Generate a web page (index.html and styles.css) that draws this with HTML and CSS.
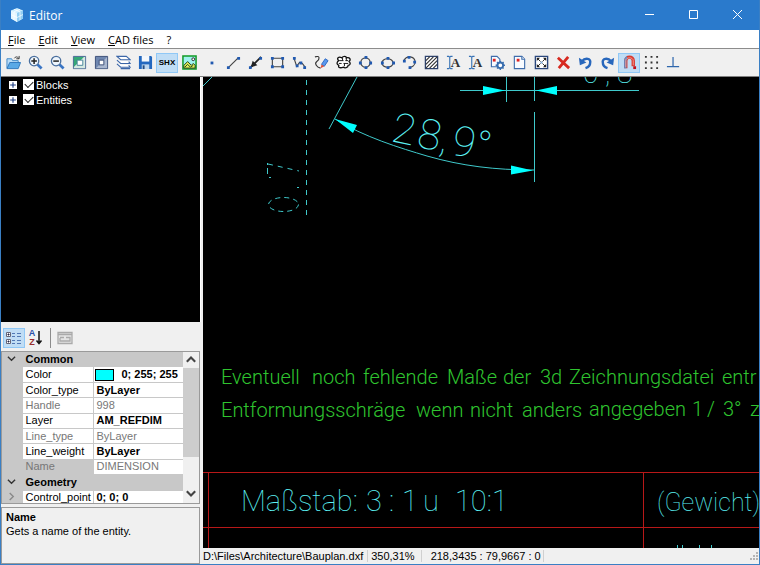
FILE: index.html
```
<!DOCTYPE html>
<html lang="en">
<head>
    <meta charset="UTF-8">
    <meta name="viewport" content="width=device-width, initial-scale=1.0">
    <title>Editor</title>
    <link rel="stylesheet" href="styles.css">
</head>
<body>

<header class="titlebar">
    <svg class="app-icon" viewBox="0 0 16 16"><path d="M8 1l6 2.500v8L8 15l-6-3.500v-8z" fill="#c8ecff"/><path d="M8 6l6-2.500v8L8 15z" fill="#8fcdf3"/><path d="M2 3.500L8 6v9l-6-3.500z" fill="#e4f6ff"/><path d="M5 2.300l6 2.500M11 2.300L5 4.800M5 5v8M2 7.500l6 3 6-3M11 5v8" stroke="#fff" stroke-width=".7" fill="none"/></svg>
    <h1>Editor</h1>
    <div class="window-buttons">
        <button type="button" aria-label="Minimize"><svg viewBox="0 0 11 11"><path d="M1 5.500h9"/></svg></button>
        <button type="button" aria-label="Maximize"><svg viewBox="0 0 11 11"><path d="M1.500 1.500h8v8h-8z"/></svg></button>
        <button type="button" aria-label="Close"><svg viewBox="0 0 11 11"><path d="M1 1l9 9M10 1l-9 9"/></svg></button>
    </div>
</header>

<nav class="menu">
    <button type="button"><u>F</u>ile</button>
    <button type="button"><u>E</u>dit</button>
    <button type="button"><u>V</u>iew</button>
    <button type="button"><u>C</u>AD files</button>
    <button type="button">?</button>
</nav>

<div class="toolbar">
    <button type="button" aria-label="Open"><svg viewBox="0 0 16 16"><path d="M1 14V4h5l1 2h6v3" fill="#b9dcf7" stroke="#3d86c6"/><path d="M1 14.500L4 8h11.500l-2.500 6.500z" fill="#5aa9e6" stroke="#2f78bd"/><path d="M9 3.500c1-2 3-2 4.500 0M14 1v3h-3" fill="none" stroke="#333"/></svg></button>
    <button type="button" aria-label="Zoom in"><svg viewBox="0 0 16 16"><path d="M10 10l4.500 4.500" stroke="#3a75c4" stroke-width="3"/><circle cx="6.500" cy="6.500" r="5" fill="#eef5fc" stroke="#4a6f9e" stroke-width="1.400"/><path d="M6.500 3.500v6M3.500 6.500h6" stroke="#222" stroke-width="1.600"/></svg></button>
    <button type="button" aria-label="Zoom out"><svg viewBox="0 0 16 16"><path d="M10 10l4.500 4.500" stroke="#3a75c4" stroke-width="3"/><circle cx="6.500" cy="6.500" r="5" fill="#eef5fc" stroke="#4a6f9e" stroke-width="1.400"/><path d="M3.500 6.500h6" stroke="#222" stroke-width="1.600"/></svg></button>
    <button type="button" aria-label="Zoom window"><svg viewBox="0 0 16 16"><path d="M1.500 1.500h13v13h-13z" fill="#fff" stroke="#3a5c8c"/><path d="M2 2h11L2 13z" fill="#35a877"/><path d="M13 2h1v12H2v-1z" fill="#d5e9e2"/><path d="M5.500 5.500h6v5.500h-6z" fill="#fff" stroke="#47849a"/></svg></button>
    <button type="button" aria-label="Fit drawing"><svg viewBox="0 0 16 16"><path d="M1.500 1.500h13v13h-13z" fill="#6f87b0" stroke="#3a4d78"/><path d="M2 14L14 2v12z" fill="#a9b7cf"/><path d="M5.500 5.500h5v5h-5z" fill="#fff" stroke="#3a4d78"/></svg></button>
    <button type="button" aria-label="Layers"><svg viewBox="0 0 16 16"><path d="M1 1.500h10l4 3.500H5zM1 5.500L5 9h10l-1.500-2M1 9.500l4 3.500h10l-1.500-2M5 14.500h10" fill="#fff" stroke="#3b66a8" stroke-width="1.200"/></svg></button>
    <button type="button" aria-label="Save"><svg viewBox="0 0 16 16"><path d="M1 1h13l1 1v13H1z" fill="#2468bf"/><path d="M4 1h8v6H4z" fill="#f4f8fc"/><path d="M4 10h8v5H4z" fill="#bed6ee"/><path d="M5 11h2v4H5z" fill="#234b80"/></svg></button>
    <button type="button" class="active shx">SHX</button>
    <button type="button" aria-label="Image"><svg viewBox="0 0 16 16"><path d="M1 1h14v14H1z" fill="#9ff2ee" stroke="#129a26" stroke-width="1.600"/><path d="M2 11l4-4 4 4 2-2 2 2v3H2z" fill="#e5ed5a" stroke="#163a16"/><path d="M3 13l3-3 3 3 3-2" fill="none" stroke="#174c18"/><circle cx="12" cy="4.500" r="1.500" fill="#fff" stroke="#222"/></svg></button>
    <button type="button" aria-label="Point"><svg viewBox="0 0 16 16"><path d="M7 7h3v3H7z" class="node"/></svg></button>
    <button type="button" aria-label="Line"><svg viewBox="0 0 16 16"><path d="M3 13L13 3" class="edge"/><path d="M1 12h3v3H1zM12 2h3v3h-3z" class="node"/></svg></button>
    <button type="button" aria-label="Arrow"><svg viewBox="0 0 16 16"><path d="M3 13L14 2" stroke="#222" stroke-width="2"/><path d="M3 13l2-7 5 5z" fill="#222"/><path d="M1 12h3v3H1zM12 2h3v3h-3z" class="node"/></svg></button>
    <button type="button" aria-label="Rectangle"><svg viewBox="0 0 16 16"><path d="M2.500 3.500h11v9h-11z" class="edge"/><path d="M1 2h3v3H1zM12 2h3v3h-3zM1 11h3v3H1zM12 11h3v3h-3z" class="node"/></svg></button>
    <button type="button" aria-label="Polyline"><svg viewBox="0 0 16 16"><path d="M2 3l3 9 3-4 3 1 3 4" class="edge"/><path d="M1 2h3v3H1zM4 10h3v3H4zM8 7h3v3H8zM12 12h3v3h-3z" class="node"/></svg></button>
    <button type="button" aria-label="Freehand"><svg viewBox="0 0 16 16"><path d="M1 2c6-2 5 3 2 5s0 6 4 7" fill="none" stroke="#333" stroke-width="1.200"/><path d="M8 10l4-6 3 2-4 6z" fill="#5a98ee" stroke="#2b66c2"/><path d="M8 10l3 2-4 2z" fill="#e05038"/></svg></button>
    <button type="button" aria-label="Cloud"><svg viewBox="0 0 16 16"><path d="M3 6C0 4 3 1 6 3c2-2 5-2 5 0 4-1 5 2 3 4 2 2 1 4-1 4 0 3-4 3-5 2-3 1-6 1-5-2-3-1-2-4 0-5z" fill="#fff" stroke="#111" stroke-width="1.400"/><path d="M4 6h4M10 6h3M3 9h3M8 9h5M7 3v3M9 9v3M11 3v3" stroke="#111" fill="none"/></svg></button>
    <button type="button" aria-label="Circle"><svg viewBox="0 0 16 16"><circle cx="8" cy="8" r="5" class="edge"/><path d="M7 1h3v3H7zM1 7h3v3H1zM12 7h3v3h-3zM7 12h3v3H7z" class="node"/></svg></button>
    <button type="button" aria-label="Ellipse"><svg viewBox="0 0 16 16"><ellipse cx="8" cy="8.500" rx="6" ry="4.500" class="edge"/><path d="M7 2h3v3H7zM1 7h3v3H1zM13 7h3v3h-3zM7 12h3v3H7z" class="node"/></svg></button>
    <button type="button" aria-label="Arc"><svg viewBox="0 0 16 16"><path d="M2 6c3-6 11-5 12 1 0 4-3 6-6 6" class="edge"/><path d="M1 5h3v3H1zM6 1h3v3H6zM12 6h3v3h-3zM7 12h3v3H7z" class="node"/></svg></button>
    <button type="button" aria-label="Hatch"><svg viewBox="0 0 16 16"><path d="M1.500 1.500h13v13h-13z" fill="#fff" stroke="#2d426c" stroke-width="1.400"/><path d="M2 6l4-4M2 10l8-8M2 14L14 2M6 14l8-8M10 14l4-4" stroke="#333" stroke-width="1.200"/></svg></button>
    <button type="button" aria-label="Text"><svg viewBox="0 0 16 16"><path d="M1 1.500h2l1 1 1-1h2M4 2v12M1 14.500h2l1-1 1 1h2" fill="none" stroke="#3772b5" stroke-width="1.200"/><text x="5" y="13" class="letter">A</text></svg></button>
    <button type="button" aria-label="Multiline text"><svg viewBox="0 0 16 16"><path d="M1 1.500h2l1 1 1-1h2M4 2v12M1 14.500h2l1-1 1 1h2" fill="none" stroke="#3772b5" stroke-width="1.200"/><text x="5" y="13" class="letter">A</text></svg></button>
    <button type="button" aria-label="Insert options"><svg viewBox="0 0 16 16"><path d="M1.500 1.500h6l3 3v8h-9z" class="page"/><path d="M3 4h3v3H3z" fill="#d22"/><circle cx="11" cy="11" r="3" fill="#fff" stroke="#396eae" stroke-width="2"/><path d="M11 6v2M11 14v2M6 11h2M14 11h2M7.500 7.500l1 1M13.500 13.500l1 1M7.500 14.500l1-1M13.500 8.500l1-1" stroke="#396eae" stroke-width="1.500"/></svg></button>
    <button type="button" aria-label="Insert block"><svg viewBox="0 0 16 16"><path d="M2.500 1.500h8l3 3v10h-11z" class="page"/><path d="M10.500 1.500v3h3" class="page"/><path d="M5 4h3v3H5z" fill="#d22"/></svg></button>
    <button type="button" aria-label="Full extents"><svg viewBox="0 0 16 16"><path d="M1.500 1.500h13v13h-13z" fill="#fff" stroke="#2a477d" stroke-width="1.500"/><path d="M3 3h3.500L3 6.500zM13 3v3.500L9.500 3zM3 13V9.500L6.500 13zM13 13H9.500L13 9.500z" fill="#222"/><path d="M4 4l3 3M12 4L9 7M4 12l3-3M12 12L9 9" stroke="#222"/><path d="M7 7h2v2H7z" fill="#7baadd"/></svg></button>
    <button type="button" aria-label="Delete"><svg viewBox="0 0 16 16"><path d="M2 3l12 11M13 2L3 14" stroke="#d7291f" stroke-width="3"/></svg></button>
    <button type="button" aria-label="Undo"><svg viewBox="0 0 16 16"><path d="M4 7c4-5 10-3 9 1 0 3-2 5-5 6" fill="none" stroke="#2867bc" stroke-width="2.600"/><path d="M1 3l1 8 7-3z" fill="#2867bc"/></svg></button>
    <button type="button" aria-label="Redo"><svg viewBox="0 0 16 16"><path d="M12 7C8 2 2 4 3 8c0 3 2 5 5 6" fill="none" stroke="#2867bc" stroke-width="2.600"/><path d="M15 3l-1 8-7-3z" fill="#2867bc"/></svg></button>
    <button type="button" class="active" aria-label="Snap"><svg viewBox="0 0 16 16"><path d="M4 14V6c0-5 8-5 8 0v6" fill="none" stroke="#d93a30" stroke-width="3.600"/><path d="M3.500 14V6c0-2 1-3 2-3.500" fill="none" stroke="#5d8fc9" stroke-width="2.400"/><path d="M4 13V6c0-4 8-4 8 0v5" fill="none" stroke="#f29890"/><path d="M12 12h3v3h-3z" fill="#c3101c"/></svg></button>
    <button type="button" aria-label="Grid"><svg viewBox="0 0 16 16"><path d="M1 1h2v2H1zM7 1h2v2H7zM13 1h2v2h-2zM1 7h2v2H1zM7 7h2v2H7zM13 7h2v2h-2zM1 13h2v2H1zM7 13h2v2H7zM13 13h2v2h-2z" fill="#333"/></svg></button>
    <button type="button" aria-label="Ortho"><svg viewBox="0 0 16 16"><path d="M7.500 2v11M1 12.500h13" stroke="#2f67ad" stroke-width="1.300"/></svg></button>
</div>

<main class="workspace">
    <aside class="sidebar">
        <ul class="tree">
            <li><button type="button" class="expand" aria-label="Expand Blocks"><svg viewBox="0 0 7 7"><path d="M3.500 1v5M1 3.500h5"/></svg></button><input type="checkbox" id="blocks" checked><label for="blocks">Blocks</label></li>
            <li><button type="button" class="expand" aria-label="Expand Entities"><svg viewBox="0 0 7 7"><path d="M3.500 1v5M1 3.500h5"/></svg></button><input type="checkbox" id="entities" checked><label for="entities">Entities</label></li>
        </ul>

        <div class="grid-tools">
            <button type="button" class="active" aria-label="Categorized"><svg viewBox="0 0 16 16"><path d="M.500 2.500h4v4h-4zM.500 9.500h4v4h-4z" fill="#fff" stroke="#667"/><path d="M1.500 4.500h2M2.500 3.500v2M1.500 11.500h2M2.500 10.500v2" stroke="#224"/><path d="M6 3.500h3M11 3.500h4M6 6.500h3M11 6.500h4M6 10.500h3M11 10.500h4M6 13.500h3M11 13.500h4" stroke="#5278b4"/></svg></button>
            <button type="button" class="sort" aria-label="Alphabetical"><span class="az"><b>A</b><b>Z</b></span><svg viewBox="0 0 8 16"><path d="M4 1v12M1.500 10.500l2.500 3 2.500-3" fill="none" stroke="#111" stroke-width="1.500"/></svg></button>
            <span class="divider"></span>
            <button type="button" disabled aria-label="Property pages"><svg viewBox="0 0 16 16"><path d="M1 2.500h14v11H1zM1 4.500h14M3 7.500h4M9 7.500h4v3.500H3v-3" fill="#e4e4e4" stroke="#aaa" stroke-width="1.300"/></svg></button>
        </div>

        <div class="properties">
            <div class="rows">
                <table>
                    <colgroup><col class="col-toggle"><col class="col-name"><col></colgroup>
                    <tr class="category"><td><button type="button" aria-label="Collapse Common"><svg viewBox="0 0 10 10"><path d="M1 3l4 4 4-4"/></svg></button></td><th colspan="2">Common</th></tr>
                    <tr><td></td><th>Color</th><td><span class="swatch"></span>0; 255; 255</td></tr>
                    <tr><td></td><th>Color_type</th><td>ByLayer</td></tr>
                    <tr class="readonly"><td></td><th>Handle</th><td>998</td></tr>
                    <tr><td></td><th>Layer</th><td>AM_REFDIM</td></tr>
                    <tr class="readonly"><td></td><th>Line_type</th><td>ByLayer</td></tr>
                    <tr><td></td><th>Line_weight</th><td>ByLayer</td></tr>
                    <tr class="readonly selected"><td></td><th>Name</th><td>DIMENSION</td></tr>
                    <tr class="category"><td><button type="button" aria-label="Collapse Geometry"><svg viewBox="0 0 10 10"><path d="M1 3l4 4 4-4"/></svg></button></td><th colspan="2">Geometry</th></tr>
                    <tr><td><button type="button" class="closed" aria-label="Expand Control_point"><svg viewBox="0 0 10 10"><path d="M3 1l4 4-4 4"/></svg></button></td><th>Control_point</th><td>0; 0; 0</td></tr>
                </table>
            </div>
            <div class="scrollbar">
                <button type="button" aria-label="Scroll up"><svg viewBox="0 0 10 10"><path d="M2 7l3-3 3 3"/></svg></button>
                <div class="track"><div class="thumb"></div></div>
                <button type="button" aria-label="Scroll down"><svg viewBox="0 0 10 10"><path d="M2 3l3 3 3-3"/></svg></button>
            </div>
        </div>

        <div class="description">
            <h2>Name</h2>
            <p>Gets a name of the entity.</p>
        </div>
    </aside>

    <section class="view">
        <svg class="drawing">
            <g transform="translate(-203 -77)">
                <!-- geometry -->
                <g class="line">
                    <path d="M203 86l9-9M357 77l-28 52"/>
                    <path d="M306.500 80v135" stroke-dasharray="5 5"/>
                    <path d="M268 164l31 7" stroke-dasharray="5 5"/>
                    <path d="M267.500 163v11" stroke-dasharray="2 3 6 3"/>
                    <path d="M269 177.500h2M297 187.500h2"/>
                    <ellipse cx="283.500" cy="204.500" rx="15" ry="7" stroke-dasharray="5 4"/>
                    <path d="M335 119C364 137 400 148 427 156C462 166 495 170 534 170"/>
                    <path d="M460 90.500h179M506.500 77v25M534.500 77v24M534.500 112v70"/>
                    <path d="M677.500 545v3M682.500 545v3M699.500 545v3M711.500 545v3"/>
                </g>
                <path class="arrow" d="M335 119l22 6-4 8zM483 86v9l22-4.500zM557 86v9l-21-4.500zM511 165.500v9l22-4z"/>
                <path class="frame" d="M203 472.500h900M203 527.500h900M208.500 472v200M643.500 472v200"/>

                <!-- dimensions -->
                <g class="cyan size-angle" transform="rotate(12 390 141)">
                    <text x="390" y="141">2</text>
                    <text x="416" y="141">8</text>
                    <text x="439" y="141">,</text>
                    <text x="451" y="141">9</text>
                    <text x="474" y="141">°</text>
                </g>
                <g class="cyan size-dim">
                    <text x="583" y="83">0</text>
                    <text x="605" y="83">,</text>
                    <text x="617" y="83">8</text>
                </g>

                <!-- notes -->
                <g class="green">
                    <text x="221" y="384">Eventuell</text>
                    <text x="312" y="384">noch</text>
                    <text x="363" y="384">fehlende</text>
                    <text x="447" y="384">Maße</text>
                    <text x="503" y="384">der</text>
                    <text x="540" y="384">3d</text>
                    <text x="569" y="384">Zeichnungsdatei</text>
                    <text x="722" y="384">entr</text>
                    <text x="221" y="417">Entformungsschräge</text>
                    <text x="416" y="417">wenn</text>
                    <text x="470" y="417">nicht</text>
                    <text x="522" y="417">anders</text>
                    <text x="589" y="416">angegeben</text>
                    <text x="692" y="416">1</text>
                    <text x="707" y="416">/</text>
                    <text x="723" y="416">3°</text>
                    <text x="750" y="416">z</text>
                </g>

                <!-- title block -->
                <g class="cyan size-title">
                    <text x="241" y="511">Maßstab:</text>
                    <text x="366" y="511">3</text>
                    <text x="389" y="511">:</text>
                    <text x="402" y="511">1</text>
                    <text x="423" y="511">u</text>
                    <text x="455" y="511">10:1</text>
                </g>
                <text class="cyan size-weight" x="657" y="511">(Gewicht)</text>
            </g>
        </svg>
        <footer class="status">
            <span class="path">D:\Files\Architecture\Bauplan.dxf</span>
            <span class="zoom">350,31%</span>
            <span class="coords">218,3435 : 79,9667 : 0</span>
            <svg class="grip" viewBox="0 0 10 10"><path d="M7 1h2v2H7zM4 4h2v2H4zM7 4h2v2H7zM1 7h2v2H1zM4 7h2v2H4zM7 7h2v2H7z" fill="#b4b4b4"/></svg>
        </footer>
    </section>
</main>

</body>
</html>
```

FILE: styles.css
```
* {
    box-sizing: border-box;
}

body {
    margin: 0;
    height: 100vh;
    display: flex;
    flex-direction: column;
    overflow: hidden;
    border: 1px solid #3a7fc4;
    border-top: none;
    background-color: #f0f0f0;
    font-family: "Liberation Sans", Arial, sans-serif;
    font-size: 11px;
    color: #000;
}

button {
    padding: 0;
    border: none;
    background: none;
    font: inherit;
    color: inherit;
}

h1, h2, p, ul {
    margin: 0;
    padding: 0;
}

/* Title bar */
.titlebar {
    height: 30px;
    flex: none;
    display: flex;
    align-items: center;
    gap: 4px;
    padding-left: 8px;
    background-color: #2a7acc;
    color: #fff;
}

.app-icon {
    width: 16px;
    height: 16px;
}

h1 {
    flex: 1;
    font: 12px "Open Sans", sans-serif;
}

.window-buttons {
    display: flex;
}

.window-buttons button {
    width: 44px;
    height: 30px;
}

.window-buttons svg {
    width: 11px;
    height: 11px;
    fill: none;
    stroke: #fff;
}

/* Menu */
.menu {
    height: 18px;
    flex: none;
    display: flex;
    align-items: center;
    gap: 13px;
    padding-left: 7px;
    background-color: #fff;
    font-family: "Open Sans", sans-serif;
}

/* Toolbar */
.toolbar {
    height: 29px;
    flex: none;
    display: flex;
    align-items: center;
    padding-left: 1px;
    border-top: 1px solid #8c8c8c;
    border-bottom: 1px solid #808080;
}

.toolbar button, .grid-tools button {
    width: 22px;
    height: 20px;
    flex: none;
    display: flex;
    align-items: center;
    justify-content: center;
}

.toolbar svg {
    width: 15px;
    height: 15px;
}

.toolbar .active, .grid-tools .active {
    background-color: #c0ddf5;
    outline: 1px solid #90c8f6;
    outline-offset: -1px;
}

.toolbar .shx {
    font-size: 8px;
    font-weight: bold;
}

.node {
    fill: #2059b0;
}

.edge {
    fill: none;
    stroke: #444;
    stroke-width: 1.2px;
}

.page {
    fill: #f8fbff;
    stroke: #3e6cab;
    stroke-width: 1.2px;
}

.letter {
    font: bold 14px "Liberation Serif", serif;
    fill: #333;
}

/* Main area */
.workspace {
    flex: 1;
    min-height: 0;
    display: flex;
    gap: 2px;
}

.sidebar {
    width: 200px;
    flex: none;
    display: flex;
    flex-direction: column;
}

.tree {
    flex: 1;
    padding: 0 8px;
    border-right: 1px solid #fff;
    background-color: #000;
    color: #fff;
    list-style: none;
}

.tree li {
    height: 15px;
    display: flex;
    align-items: center;
}

.expand {
    width: 8px;
    height: 8px;
    display: flex;
    margin-right: 6px;
    background-color: #fff;
}

.expand svg {
    width: 8px;
    height: 8px;
    stroke: #1c3c80;
}

.tree input {
    appearance: none;
    width: 11px;
    height: 11px;
    margin: 0 2px 0 0;
    background-color: #fff;
}

.tree input:checked::before {
    content: "";
    display: block;
    width: 7px;
    height: 4px;
    margin: 2px;
    border-left: 1px solid #222;
    border-bottom: 1px solid #222;
    transform: rotate(-45deg);
}

.grid-tools {
    height: 29px;
    flex: none;
    display: flex;
    align-items: center;
    padding: 3px 2px 0;
}

.grid-tools svg {
    height: 16px;
}

.divider {
    width: 1px;
    height: 20px;
    margin: 0 3px;
    background-color: #8c8c8c;
}

.az b {
    display: block;
    font-size: 9px;
    line-height: 9px;
    color: #2850a8;
}

.az b + b {
    color: #982c2c;
}

/* Property grid */
.properties {
    height: 153px;
    flex: none;
    display: flex;
    overflow: hidden;
    border: 1px solid #9a9a9a;
    margin-right: 1px;
}

.rows {
    flex: 1;
    overflow: hidden;
    background-color: #fff;
}

table {
    width: 100%;
    height: 154px;
    table-layout: fixed;
    border-collapse: collapse;
}

.col-toggle {
    width: 20px;
}

.col-name {
    width: 71px;
}

td, th {
    padding: 0 0 0 3px;
    border-bottom: 1px solid #c8c8c8;
    border-right: 1px solid #c8c8c8;
    line-height: 13px;
    text-align: left;
    white-space: nowrap;
    font-weight: normal;
}

td:first-child {
    padding: 0 0 0 5px;
    background-color: #c8c8c8;
}

td:last-child {
    border-right: none;
    font-weight: bold;
}

.category th {
    background-color: #c8c8c8;
    font-weight: bold;
}

.readonly th, .readonly td:last-child {
    color: #777;
    font-weight: normal;
}

.selected th {
    background-color: #c8c8c8;
}

td svg {
    display: block;
    width: 9px;
    height: 9px;
    fill: none;
    stroke: #333;
    stroke-width: 1.5px;
}

.closed svg {
    stroke: #888;
}

.swatch {
    display: inline-block;
    width: 19px;
    height: 12px;
    margin: 0 8px 0 -2px;
    border: 1px solid #000;
    background-color: #0ff;
    vertical-align: middle;
}

.scrollbar {
    width: 16px;
    display: flex;
    flex-direction: column;
    background-color: #f0f0f0;
}

.scrollbar button {
    height: 16px;
}

.scrollbar svg {
    width: 14px;
    height: 14px;
    fill: none;
    stroke: #444;
    stroke-width: 1.5px;
}

.track {
    flex: 1;
}

.thumb {
    height: 75%;
    background-color: #cdcdcd;
}

.description {
    height: 57px;
    flex: none;
    margin: 3px 1px 0 0;
    padding: 2px 4px;
    border: 1px solid #9a9a9a;
}

h2 {
    font-size: 11px;
    line-height: 14px;
}

.description p {
    line-height: 15px;
}

/* Drawing */
.view {
    flex: 1;
    min-width: 0;
    display: flex;
    flex-direction: column;
}

.drawing {
    flex: 1;
    min-height: 0;
    width: 100%;
    background-color: #000;
    font-family: Roboto, sans-serif;
    font-weight: 300;
}

.line {
    fill: none;
    stroke: #3fc9cb;
}

.arrow {
    fill: #0ff;
}

.frame {
    fill: none;
    stroke: #b81818;
}

.green {
    fill: #2fc42f;
    font-size: 20px;
}

.cyan {
    fill: #5cf2f4;
    font-weight: 100;
}

.size-angle {
    font-size: 42px;
}

.size-dim {
    font-size: 28px;
}

.size-title {
    font-size: 29px;
}

.size-weight {
    font-size: 25px;
}

.status {
    height: 16px;
    flex: none;
    display: flex;
    align-items: center;
    background-color: #f0f0f0;
    white-space: nowrap;
}

.path {
    padding-right: 4px;
    border-right: 1px solid #d0d0d0;
}

.zoom {
    padding: 0 6px 0 3px;
    border-right: 1px solid #d0d0d0;
}

.coords {
    padding: 0 2px 0 9px;
    border-right: 1px solid #d0d0d0;
}

.grip {
    width: 10px;
    height: 10px;
    margin-left: auto;
}
```
